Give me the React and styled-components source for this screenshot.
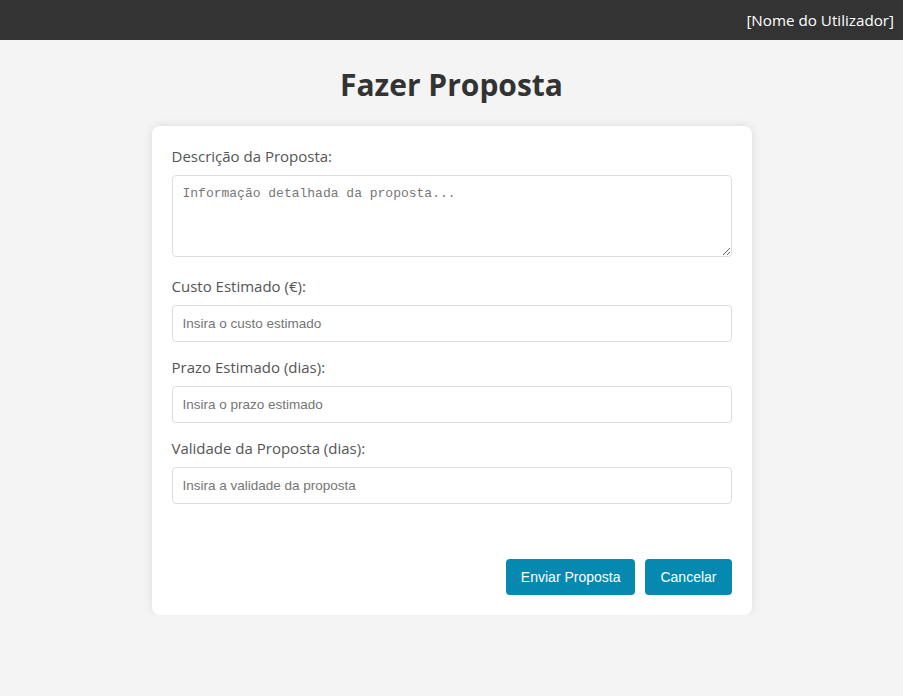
import React from "react";
import styled, { createGlobalStyle } from "styled-components";

const GlobalStyle = createGlobalStyle`
  html, body { margin: 0; padding: 0; }
  body {
    background: #f4f4f4;
    font-family: "Open Sans", "Noto Sans", sans-serif;
    color: #333;
  }
  * { box-sizing: border-box; }
`;

const Header = styled.header`
  height: 40px;
  background: #333;
  display: flex;
  align-items: center;
  justify-content: flex-end;
  padding: 0 9px;
`;

const UserName = styled.span`
  color: #fff;
  font-size: 15.2px;
  font-family: "Open Sans", "Noto Sans", sans-serif;
`;

const Main = styled.main`
  display: flex;
  flex-direction: column;
  align-items: center;
  padding-top: 24px;
`;

const Title = styled.h1`
  margin: 0 0 20px;
  font-size: 30px;
  line-height: 42px;
  font-weight: 700;
  color: #333;
`;

const Card = styled.form`
  width: 600px;
  background: #fff;
  border-radius: 8px;
  box-shadow: 0 0 10px rgba(0, 0, 0, 0.1);
  padding: 20px;
`;

const Field = styled.div`
  margin-bottom: 15px;
`;

const Label = styled.label`
  display: block;
  font-size: 15px;
  line-height: 21px;
  color: #555;
  margin-bottom: 8px;
`;

const TextArea = styled.textarea`
  display: block;
  width: 100%;
  height: 82px;
  padding: 10px;
  border: 1px solid #ddd;
  border-radius: 4px;
  font-family: "Liberation Mono", "DejaVu Sans Mono", monospace;
  font-size: 13px;
  color: #333;
  margin-bottom: 19px;
  resize: vertical;
  &::placeholder { color: #777; }
`;

const Input = styled.input`
  display: block;
  width: 100%;
  height: 37px;
  padding: 0 10px;
  border: 1px solid #ddd;
  border-radius: 4px;
  font-family: "Liberation Sans", Arial, sans-serif;
  font-size: 13.5px;
  color: #333;
  &::placeholder { color: #757575; }
`;

const Actions = styled.div`
  display: flex;
  justify-content: flex-end;
  gap: 10px;
  margin-top: 55px;
`;

const Button = styled.button`
  height: 36px;
  padding: 0 15px;
  border: none;
  border-radius: 4px;
  background: #0589b0;
  color: #fff;
  font-family: "Liberation Sans", Arial, sans-serif;
  font-size: 14px;
  cursor: pointer;
`;

export default function App() {
  return (
    <>
      <GlobalStyle />
      <Header>
        <UserName>[Nome do Utilizador]</UserName>
      </Header>
      <Main>
        <Title>Fazer Proposta</Title>
        <Card onSubmit={(e) => e.preventDefault()}>
          <Field>
            <Label>Descrição da Proposta:</Label>
            <TextArea placeholder="Informação detalhada da proposta..." />
          </Field>
          <Field>
            <Label>Custo Estimado (€):</Label>
            <Input type="text" placeholder="Insira o custo estimado" />
          </Field>
          <Field>
            <Label>Prazo Estimado (dias):</Label>
            <Input type="text" placeholder="Insira o prazo estimado" />
          </Field>
          <Field>
            <Label>Validade da Proposta (dias):</Label>
            <Input type="text" placeholder="Insira a validade da proposta" />
          </Field>
          <Actions>
            <Button type="submit">Enviar Proposta</Button>
            <Button type="button">Cancelar</Button>
          </Actions>
        </Card>
      </Main>
    </>
  );
}
